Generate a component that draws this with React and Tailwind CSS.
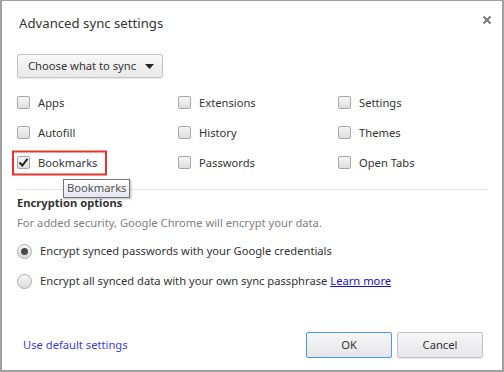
import { useState } from "react";

const font = { fontFamily: '"Noto Sans", "Open Sans", sans-serif' };

const items = [
  ["Apps", "Extensions", "Settings"],
  ["Autofill", "History", "Themes"],
  ["Bookmarks", "Passwords", "Open Tabs"],
];

const CheckBox = ({ checked }) => (
  <span className="w-[13px] h-[13px] shrink-0 rounded-[2px] border border-[#a9a9a9] bg-gradient-to-b from-[#f4f4f4] to-[#dedede] flex items-center justify-center">
    {checked && (
      <svg width="11" height="11" viewBox="0 0 11 11">
        <path d="M1.5 5.5 L4.3 8.5 L9.5 1.8" fill="none" stroke="#222" strokeWidth="2" />
      </svg>
    )}
  </span>
);

const Radio = ({ checked }) => (
  <span className="w-[15px] h-[15px] shrink-0 rounded-full border border-[#adadad] bg-gradient-to-b from-[#f6f6f6] to-[#dcdcdc] flex items-center justify-center">
    {checked && <span className="w-[7px] h-[7px] rounded-full bg-[#4a4a4a]" />}
  </span>
);

export default function App() {
  const [checked] = useState("Bookmarks");

  return (
    <div
      className="w-[504px] h-[372px] bg-white border-2 border-t border-[#a0a0a0] text-[#333] text-[11.2px] flex flex-col"
      style={font}
    >
      <div className="flex items-start justify-between pl-[17px] pr-[10px] pt-[12px]">
        <h1 className="text-[13.2px] text-[#333] leading-[20px]">Advanced sync settings</h1>
        <svg width="10" height="10" viewBox="0 0 10 10" className="mt-[2px]">
          <path d="M1.5 1.5 L8.5 8.5 M8.5 1.5 L1.5 8.5" stroke="#777" strokeWidth="2" />
        </svg>
      </div>

      <div className="pl-[15px] pt-[21px]">
        <button className="h-[24px] w-[146px] flex items-center justify-between pl-[10px] pr-[8px] border border-[#c4c4c4] rounded-[2px] bg-gradient-to-b from-[#f8f8f8] to-[#e8e8e8] text-[11.2px] text-[#333] shadow-[0_1px_0_rgba(0,0,0,0.08)]">
          <span>Choose what to sync</span>
          <svg width="9" height="5" viewBox="0 0 9 5">
            <path d="M0 0 H9 L4.5 5 Z" fill="#222" />
          </svg>
        </button>
      </div>

      <div className="grid grid-cols-[161px_160px_1fr] pl-[15px] pt-[10px]">
        {items.flat().map((label) => (
          <div key={label} className="h-[30px] flex items-center">
            <div className="relative flex items-center gap-[8px]">
              <CheckBox checked={label === checked} />
              <span>{label}</span>
              {label === checked && (
                <>
                  <div className="absolute left-[-5px] top-1/2 -translate-y-1/2 w-[95px] h-[25px] border-2 border-[#e8302c]" />
                  <div className="absolute left-[46px] top-[24px] px-[3px] h-[19px] flex items-center border border-[#767676] bg-gradient-to-b from-white to-[#e4e5f0] text-[#555] shadow-[1px_1px_2px_rgba(0,0,0,0.3)] whitespace-nowrap z-10">
                    Bookmarks
                  </div>
                </>
              )}
            </div>
          </div>
        ))}
      </div>

      <div className="mx-[15px] mt-[11px] border-t border-[#e3e3e3]" />

      <div className="pl-[15px] pt-[4px]">
        <h2 className="font-bold leading-[18px]">Encryption options</h2>
        <p className="text-[#808080] leading-[18px] mt-[2px]">
          For added security, Google Chrome will encrypt your data.
        </p>
        <div className="flex items-center gap-[8px] h-[30px] mt-[4px]">
          <Radio checked />
          <span>Encrypt synced passwords with your Google credentials</span>
        </div>
        <div className="flex items-center gap-[8px] h-[30px]">
          <Radio />
          <span>
            Encrypt all synced data with your own sync passphrase{" "}
            <a className="text-[#1a0dcc] underline" href="#">Learn more</a>
          </span>
        </div>
      </div>

      <div className="mt-auto flex items-center justify-between pl-[21px] pr-[19px] pb-[12px]">
        <a className="text-[#3b3bdd]" href="#">Use default settings</a>
        <div className="flex gap-[5px]">
          <button className="w-[86px] h-[26px] border border-[#4d90fe] rounded-[2px] bg-gradient-to-b from-[#f6f6f6] to-[#e6e5e9] text-[#333]">
            OK
          </button>
          <button className="w-[86px] h-[26px] border border-[#c4c4c4] rounded-[2px] bg-gradient-to-b from-[#f6f6f6] to-[#e6e5e9] text-[#333] shadow-[0_1px_0_rgba(0,0,0,0.08)]">
            Cancel
          </button>
        </div>
      </div>
    </div>
  );
}
